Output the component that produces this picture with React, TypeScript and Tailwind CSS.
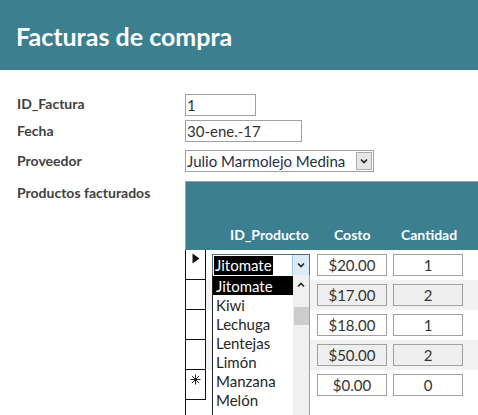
import React from "react";

const FONT = { fontFamily: "Lato, 'Open Sans', sans-serif" };

const PRODUCTOS = ["Jitomate", "Kiwi", "Lechuga", "Lentejas", "Limón", "Manzana", "Melón"];

const FILAS = [
  { costo: "$20.00", cantidad: "1" },
  { costo: "$17.00", cantidad: "2" },
  { costo: "$18.00", cantidad: "1" },
  { costo: "$50.00", cantidad: "2" },
  { costo: "$0.00", cantidad: "0" },
];

function Chevron({ up = false }: { up?: boolean }) {
  return (
    <svg width="8" height="6" viewBox="0 0 8 6" className={up ? "rotate-180" : ""}>
      <path d="M1 1.5 L4 4.5 L7 1.5" fill="none" stroke="#222" strokeWidth="1.6" />
    </svg>
  );
}

function Asterisco() {
  return (
    <svg width="11" height="11" viewBox="0 0 11 11">
      <g stroke="#222" strokeWidth="1">
        <path d="M5.5 0.5 V10.5" />
        <path d="M0.5 5.5 H10.5" />
        <path d="M1.9 1.9 L9.1 9.1" />
        <path d="M9.1 1.9 L1.9 9.1" />
      </g>
    </svg>
  );
}

export default function App() {
  return (
    <div className="h-[415px] w-[478px] overflow-hidden bg-white text-[#333]" style={FONT}>
      {/* Header */}
      <div className="h-[70px] bg-[#3b7f91] flex items-center pl-4 pt-[3px]">
        <h1 className="text-[25px] font-bold text-white">Facturas de compra</h1>
      </div>

      {/* Campos */}
      <div className="pt-6">
        <div className="flex items-center h-[22px]">
          <span className="w-[185px] pl-[17px] text-[14px] font-bold text-[#404040] -mt-[4px]">ID_Factura</span>
          <div className="w-[71px] h-[22px] border border-[#a0a0a0] px-[1px] text-[15px] leading-[20px]">1</div>
        </div>
        <div className="flex items-center h-[22px] mt-1">
          <span className="w-[185px] pl-[17px] text-[14px] font-bold text-[#404040] -mt-[2px]">Fecha</span>
          <div className="w-[117px] h-[22px] border border-[#a0a0a0] px-[1px] text-[15px] leading-[20px]">30-ene.-17</div>
        </div>
        <div className="flex items-center h-[22px] mt-2">
          <span className="w-[185px] pl-[17px] text-[14px] font-bold text-[#404040] -mt-[2px]">Proveedor</span>
          <div className="w-[189px] h-[22px] border border-[#a0a0a0] flex">
            <span className="flex-1 px-[1px] text-[15px] leading-[20px] text-[#1f2f45] whitespace-nowrap overflow-hidden">
              Julio Marmolejo Medina
            </span>
            <div className="w-[16px] my-[1px] mr-[1px] bg-[#e6e6e6] border border-[#adadad] flex items-center justify-center">
              <Chevron />
            </div>
          </div>
        </div>

        {/* Subformulario */}
        <div className="flex mt-[9px]">
          <div className="w-[185px] pl-[17px] pt-[1px] text-[14px] font-bold text-[#404040]">Productos facturados</div>
          <div className="flex-1">
            <div className="h-[69px] bg-[#3b7f91] border-t border-l border-[#a0a0a0] flex items-end pb-[5px] text-white font-bold text-[14px]">
              <span className="w-[134px] pl-[44px]">ID_Producto</span>
              <span className="w-[81px] pl-[14px]">Costo</span>
              <span>Cantidad</span>
            </div>

            {FILAS.map((f, i) => (
              <div key={i} className="flex h-[30px]">
                <div className="w-[21px] h-[30px] border-l border-r border-b border-[#111] flex justify-center">
                  {i === 0 && (
                    <svg width="8" height="11" viewBox="0 0 8 11" className="mt-[3px] ml-[1px]">
                      <path d="M0.5 0.5 L7.5 5.5 L0.5 10.5 Z" fill="#111" />
                    </svg>
                  )}
                  {i === 4 && (
                    <span className="mt-[4px]">
                      <Asterisco />
                    </span>
                  )}
                </div>
                <div className={`flex-1 flex items-center pl-[6px] ${i % 2 === 1 ? "bg-[#f2f2f2]" : "bg-white"}`}>
                  <div className="relative w-[98px] h-[22px]">
                    {i === 0 && (
                      <>
                        <div className="w-[98px] h-[22px] border border-[#5a6a7a] flex bg-white">
                          <span className="flex-1 flex items-center pl-[1px]">
                            <span className="bg-black text-white text-[15px] leading-[19px] px-[1px]">Jitomate</span>
                          </span>
                          <div className="w-[17px] bg-[#dcebf8] border-l border-[#9ec3e6] flex items-center justify-center">
                            <Chevron />
                          </div>
                        </div>
                        <div className="absolute left-0 top-[21px] z-10 w-[98px] h-[140px] bg-white border-l border-[#222] border-r border-r-[#a0a0a0] flex">
                          <div className="flex-1 pt-[1px]">
                            {PRODUCTOS.map((p, k) => (
                              <div
                                key={p}
                                className={`h-[19px] pl-[3px] text-[15px] leading-[21px] ${k === 0 ? "bg-black text-white" : "text-[#262626]"}`}
                              >
                                {p}
                              </div>
                            ))}
                          </div>
                          <div className="w-[16px] bg-[#f0f0f0] flex flex-col items-center">
                            <div className="h-[19px] flex items-center justify-center">
                              <Chevron up />
                            </div>
                            <div className="mt-[13px] w-[15px] h-[18px] bg-[#cdcdcd]" />
                          </div>
                        </div>
                      </>
                    )}
                  </div>
                  <div
                    className={`ml-[7px] w-[70px] h-[22px] border border-[#a0a0a0] text-center text-[15px] leading-[20px] ${i % 2 === 1 ? "bg-[#efefef]" : "bg-white"}`}
                  >
                    {f.costo}
                  </div>
                  <div
                    className={`ml-[6px] w-[70px] h-[22px] border border-[#a0a0a0] text-center text-[15px] leading-[20px] ${i % 2 === 1 ? "bg-[#efefef]" : "bg-white"}`}
                  >
                    {f.cantidad}
                  </div>
                </div>
              </div>
            ))}
            <div className="w-[21px] h-[20px] border-l border-[#111]" />
          </div>
        </div>
      </div>
    </div>
  );
}
